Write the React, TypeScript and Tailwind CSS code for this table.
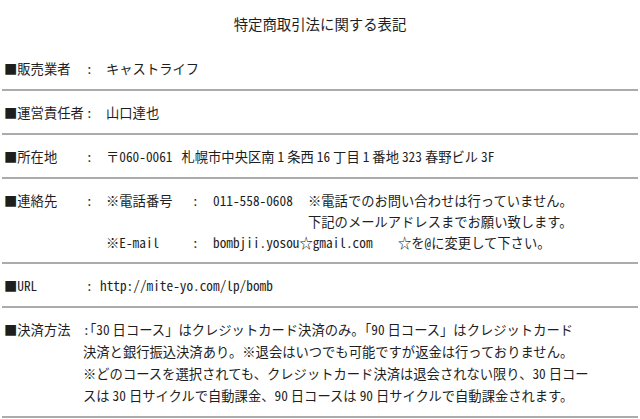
import React from "react";

const font = "font-['Noto_Sans_CJK_JP',sans-serif] [font-feature-settings:'hwid']";

interface RowProps {
  label: string;
  children: React.ReactNode;
  valueClass?: string;
  lineClass?: string;
}

function Row({ label, children, valueClass = "ml-[15px]", lineClass = "leading-[22px]" }: RowProps) {
  return (
    <div className={`mx-[2px] flex border-b-2 border-[#ababab] pb-[9px] pt-[11px] pl-[2px] ${lineClass}`}>
      <span className="w-[81px] shrink-0 whitespace-nowrap">{label}</span>
      <span className="w-[6px] shrink-0 pl-[1px]">:</span>
      <div className={`whitespace-nowrap ${valueClass}`}>{children}</div>
    </div>
  );
}

// narrow gap used round the numbers in the text
function G() {
  return <span className="inline-block w-[3px]" />;
}

// half-width opening bracket
function Open() {
  return <span className="[font-feature-settings:'hwid','halt']">「</span>;
}

export default function App() {
  return (
    <div className={`h-[419px] w-[640px] overflow-hidden bg-white text-[13.3px] text-[#1e1e1e] ${font}`}>
      <div className="flex h-[47px] items-center justify-center text-[14.4px]">
        特定商取引法に関する表記
      </div>

      <Row label="■販売業者">キャストライフ</Row>
      <Row label="■運営責任者">山口達也</Row>
      <Row label="■所在地">
        〒060-0061<span className="inline-block w-[9px]" />札幌市中央区南<G />1<G />条西<G />16<G />丁目<G />1<G />番地<G />323<G />春野ビル<G />3F
      </Row>

      <Row label="■連絡先" lineClass="leading-[21px]">
        <div className="flex">
          <span className="w-[84px]">※電話番号</span>
          <span className="w-[23px] pl-[2px]">:</span>
          <span className="w-[95px]">011-558-0608</span>
          <span>※電話でのお問い合わせは行っていません。</span>
        </div>
        <div className="pl-[202px]">下記のメールアドレスまでお願い致します。</div>
        <div className="flex">
          <span className="w-[84px]">※E-mail</span>
          <span className="w-[23px] pl-[2px]">:</span>
          <span className="w-[185px]">bombjii.yosou☆gmail.com</span>
          <span>☆を@に変更して下さい。</span>
        </div>
      </Row>

      <Row label="■URL" valueClass="ml-[9px]">http://mite-yo.com/lp/bomb</Row>

      <div className="mx-[2px] flex border-b-2 border-[#ababab] pb-[9px] pt-[11px] pl-[2px] leading-[22px]">
        <span className="w-[79px] shrink-0 whitespace-nowrap">■決済方法</span>
        <div className="whitespace-nowrap">
          <div>
            :<Open />30<G />日コース」はクレジットカード決済のみ。<Open />90<G />日コース」はクレジットカード
          </div>
          <div>決済と銀行振込決済あり。※退会はいつでも可能ですが返金は行っておりません。</div>
          <div>※どのコースを選択されても、クレジットカード決済は退会されない限り、30<G />日コー</div>
          <div>スは<G />30<G />日サイクルで自動課金、90<G />日コースは<G />90<G />日サイクルで自動課金されます。</div>
        </div>
      </div>
    </div>
  );
}
